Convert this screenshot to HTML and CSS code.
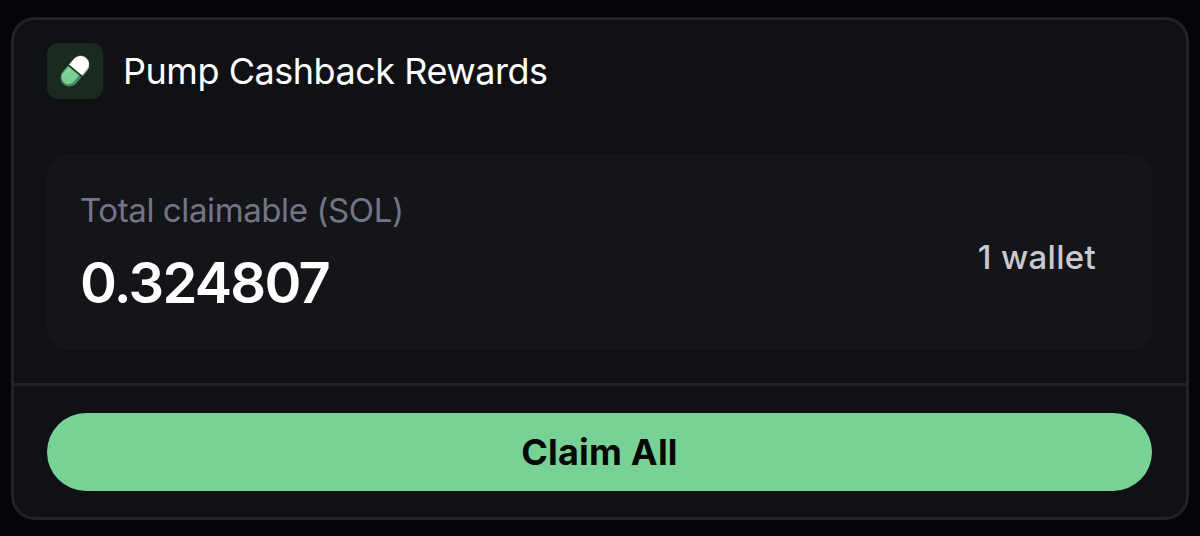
FILE: index.html
```html
<!DOCTYPE html>
<html lang="en">
<head>
  <meta charset="UTF-8">
  <meta name="viewport" content="width=device-width, initial-scale=1.0">
  <title>Pump Cashback Rewards</title>
  <link rel="stylesheet" href="styles.css">
</head>
<body>
  <div class="card">
    <!-- Header -->
    <div class="card-header">
      <div class="icon">
        <svg width="56" height="56" viewBox="0 0 56 56">
          <g transform="rotate(40 28 28)">
            <rect x="19" y="10.5" width="18" height="35" rx="9" fill="#4a8763"/>
            <path d="M19.500 27V19.500a8.500 8.500 0 0 1 17 0V27z" fill="#ffffff"/>
            <path d="M34.500 14a9 9 0 0 1 2.500 5.500V27h-1.500v-8c0-2-.4-4-1-5z" fill="#b9c9c0"/>
            <path d="M20 28.500h14v8a7 7.500 0 0 1-14 0z" fill="#78d094"/>
            <path d="M22.500 30v5.500" stroke="#8edca6" stroke-width="1.500" stroke-linecap="round"/>
            <path d="M19 27.700h18" stroke="#1b3225" stroke-width="1.500"/>
          </g>
        </svg>
      </div>
      <h2>Pump Cashback Rewards</h2>
    </div>

    <!-- Claimable amount -->
    <div class="card-body">
      <div class="claim-box">
        <div class="claim-info">
          <p class="label">Total claimable (SOL)</p>
          <p class="amount">0.324807</p>
        </div>
        <span class="wallets">1 wallet</span>
      </div>
    </div>

    <!-- Footer -->
    <div class="card-footer">
      <button class="claim-btn">Claim All</button>
    </div>
  </div>
</body>
</html>
```

FILE: styles.css
```css
* {
  box-sizing: border-box;
}

body {
  margin: 0;
  height: 536px;
  padding: 17px 11px 16px;
  background-color: #040508;
  font-family: Inter, "Liberation Sans", sans-serif;
  color: #fff;
  overflow: hidden;
}

h2,
p {
  margin: 0;
}

.card {
  height: 503px;
  border: 3px solid #222328;
  border-radius: 24px;
  background-color: #101115;
}

/* Header */
.card-header {
  display: flex;
  align-items: center;
  gap: 20px;
  height: 134px;
  padding: 23px 33px 55px;
}

.icon {
  width: 56px;
  height: 56px;
  border-radius: 11px;
  background-color: #1a2a21;
}

.icon svg {
  display: block;
}

.card-header h2 {
  font-size: 36px;
  font-weight: 400;
  line-height: 56px;
  letter-spacing: -0.47px;
}

/* Claimable amount */
.card-body {
  height: 229px;
  padding: 0 34px 33px 33px;
}

.claim-box {
  display: flex;
  align-items: center;
  justify-content: space-between;
  height: 196px;
  padding: 0 55px 0 32px;
  border: 1px solid #16171b;
  border-radius: 22px;
  background-color: #141519;
}

.label {
  font-size: 33px;
  line-height: 48px;
  letter-spacing: -0.4px;
  color: #747484;
}

.amount {
  margin-top: 13px;
  font-size: 56px;
  font-weight: 600;
  line-height: 72px;
  letter-spacing: -1.7px;
}

.wallets {
  padding-top: 10px;
  font-size: 33px;
  font-weight: 500;
  letter-spacing: 0.3px;
  color: #c8c9d1;
}

/* Footer */
.card-footer {
  padding: 27px 34px 0 33px;
  border-top: 3px solid #222328;
}

.claim-btn {
  display: block;
  width: 100%;
  height: 78px;
  padding: 0;
  border: none;
  border-radius: 39px;
  background-color: #79d295;
  font-family: inherit;
  font-size: 36px;
  font-weight: 700;
  letter-spacing: 0.2px;
  color: #050a07;
}
```
